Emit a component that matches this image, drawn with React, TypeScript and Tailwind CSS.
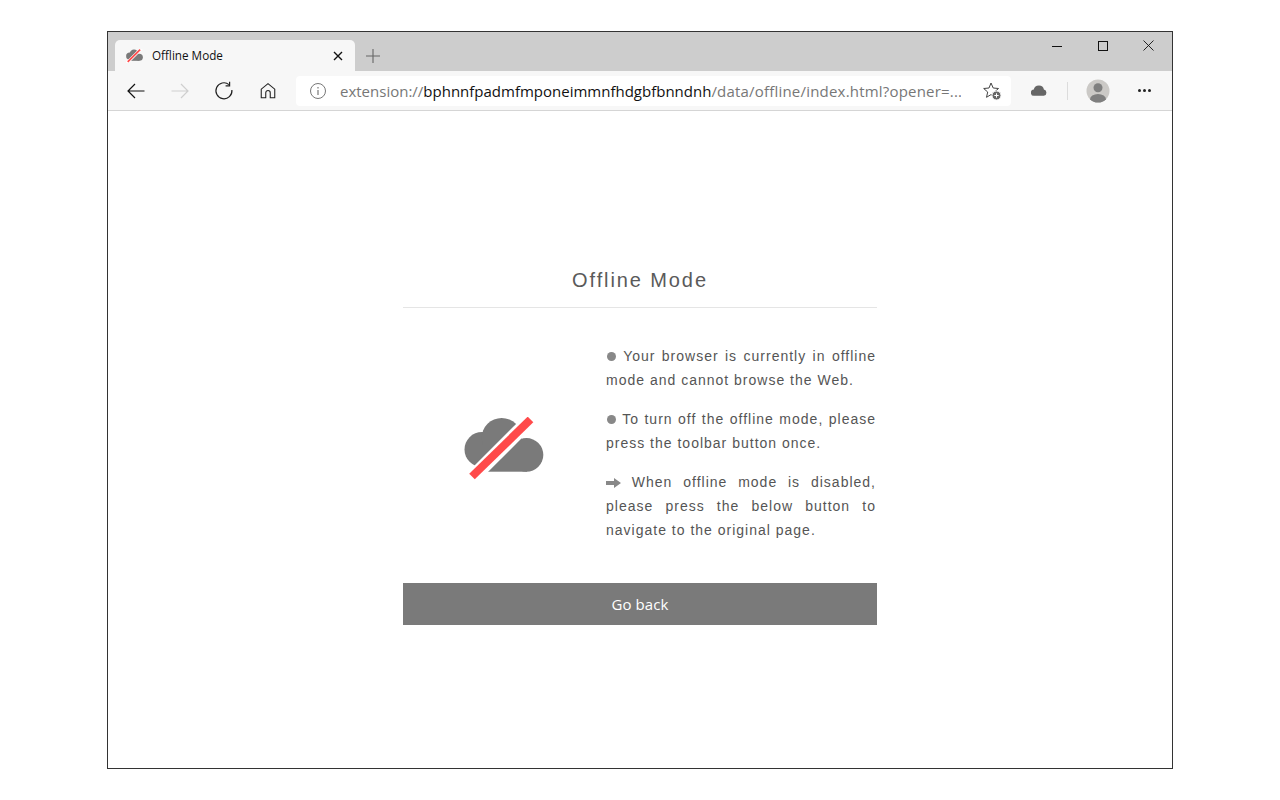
import React from "react";

// Cloud with a red slash, used large on the page and small on the tab
function OfflineCloud({ className }: { className: string }) {
  return (
    <svg viewBox="0 0 80 64" className={className}>
      <g fill="#7a7a7a">
        <circle cx="18" cy="32.500" r="17.500" />
        <circle cx="37.700" cy="21" r="20" />
        <circle cx="62.500" cy="37.900" r="16.800" />
        <rect x="18" y="28" width="45" height="26.700" />
      </g>
      <line x1="3" y1="66" x2="74" y2="-5" stroke="#ffffff" strokeWidth="14" />
      <line x1="8" y1="59.500" x2="66.500" y2="2.500" stroke="#ff4a4a" strokeWidth="8" />
    </svg>
  );
}

function NavIcon({ children, className }: { children: React.ReactNode; className?: string }) {
  return (
    <svg
      viewBox="0 0 20 20"
      fill="none"
      stroke="currentColor"
      strokeWidth="1.2"
      className={className ?? "w-5 h-5"}
    >
      {children}
    </svg>
  );
}

function Dot() {
  return <span className="inline-block w-[9px] h-[9px] rounded-full bg-[#888888] ml-px mr-px" />;
}

export default function App() {
  return (
    <div className="w-[1280px] h-[800px] bg-white pt-[31px] pl-[107px] overflow-hidden">
      <div className="w-[1066px] h-[738px] border border-[#333333] flex flex-col bg-white">
        {/* Tab strip */}
        <div className="h-[39px] bg-[#cdcdcd] flex items-end pl-[7px] relative">
          <div className="w-[240px] h-[31px] bg-[#f7f7f7] rounded-t-[5px] flex items-center pl-[11px] pr-[12px]">
            <OfflineCloud className="w-[17px] h-[14px]" />
            <span className="ml-[9px] text-[11.7px] text-[#111111] font-['Open_Sans',sans-serif] flex-1">
              Offline Mode
            </span>
            <svg viewBox="0 0 10 10" className="w-[10px] h-[10px]" stroke="#111111" strokeWidth="1.4">
              <path d="M1 1l8 8M9 1l-8 8" />
            </svg>
          </div>
          <svg viewBox="0 0 14 14" className="w-[14px] h-[14px] ml-[11px] mb-[8px]" stroke="#666666" strokeWidth="1.1">
            <path d="M7 0v14M0 7h14" />
          </svg>
          {/* Window controls */}
          <div className="absolute right-[18px] top-[8px] flex items-center">
            <svg viewBox="0 0 10 10" className="w-[10px] h-[10px]" stroke="#111111" strokeWidth="1">
              <path d="M0 5.5h10" />
            </svg>
            <svg viewBox="0 0 10 10" className="w-[10px] h-[10px] ml-[36px]" stroke="#111111" strokeWidth="1" fill="none">
              <rect x="0.5" y="0.5" width="9" height="9" />
            </svg>
            <svg viewBox="0 0 11 11" className="w-[11px] h-[11px] ml-[35px]" stroke="#111111" strokeWidth="0.9">
              <path d="M0.5 0.5l10 10M10.5 0.5l-10 10" />
            </svg>
          </div>
        </div>

        {/* Toolbar */}
        <div className="h-[40px] bg-[#f7f7f7] border-b border-[#d5d5d5] flex items-center pl-[18px]">
          <NavIcon className="w-5 h-5 text-[#111111]">
            <path d="M18.5 10H2M9 3l-7 7 7 7" />
          </NavIcon>
          <NavIcon className="w-5 h-5 text-[#cfcfcf] ml-[24px]">
            <path d="M1.5 10H18M11 3l7 7-7 7" />
          </NavIcon>
          <NavIcon className="w-5 h-5 text-[#222222] ml-[24px]">
            <path d="M15 3.6A8 8 0 1 0 17.9 9" />
            <path d="M15.6 0.8v4h-4" />
          </NavIcon>
          <NavIcon className="w-[18px] h-[18px] text-[#222222] ml-[25px]">
            <path d="M2.5 17.5V8L10 1.8 17.5 8v9.5h-5v-5.5a2.5 2.5 0 0 0-5 0v5.5z" />
          </NavIcon>
          <div className="ml-[19px] w-[715px] h-[30px] bg-white rounded-[4px] flex items-center pl-[14px] font-['Open_Sans',sans-serif] text-[15px] whitespace-nowrap overflow-hidden">
            <svg viewBox="0 0 16 16" className="w-4 h-4 shrink-0" fill="none" stroke="#777777" strokeWidth="1">
              <circle cx="8" cy="8" r="7.5" />
              <path d="M8 7v5M8 4v1.5" strokeWidth="1.2" />
            </svg>
            <span className="ml-[14px] w-[621px] pt-px overflow-hidden text-[#777777]">
              extension://<span className="text-[#111111]">bphnnfpadmfmponeimmnfhdgbfbnndnh</span>
              <span className="tracking-[0.2px]">/data/offline/index.html?opener=...</span>
            </span>
            <svg viewBox="0 0 20 20" className="w-5 h-5 ml-[21px] shrink-0" fill="none" stroke="#444444" strokeWidth="1">
              <path d="M9 2l2.2 5 5.3.5-4 3.5 1 5.300L9 13.600 4.500 16.300l1.200-5.300-4-3.500 5.300-.5z" />
              <circle cx="14.500" cy="14.500" r="4.500" fill="#666666" stroke="#f7f7f7" />
              <path d="M14.500 12.300v4.400M12.300 14.500h4.400" stroke="#ffffff" />
            </svg>
          </div>
          <svg viewBox="0 0 16 11" className="w-4 h-[11px] ml-[20px]" fill="#666666">
            <path d="M3.200 10.800a3.100 3.100 0 0 1-.4-6.200A5.200 5.200 0 0 1 8 .5a5 5 0 0 1 4.900 4.100 3.150 3.150 0 0 1-.1 6.200z" />
          </svg>
          <div className="w-px h-[18px] bg-[#dcdcdc] ml-[20px]" />
          <svg viewBox="0 0 24 24" className="w-6 h-6 ml-[18px]">
            <defs>
              <clipPath id="avatar">
                <circle cx="12" cy="12" r="11.500" />
              </clipPath>
            </defs>
            <circle cx="12" cy="12" r="11.500" fill="#cbc9c6" />
            <g clipPath="url(#avatar)" fill="#7f7f7f">
              <circle cx="12" cy="8.800" r="4.500" />
              <ellipse cx="12" cy="20.500" rx="8" ry="5.500" />
            </g>
          </svg>
          <div className="flex gap-[2.500px] ml-[28px]">
            <span className="w-[2.500px] h-[2.500px] rounded-full bg-[#222222]" />
            <span className="w-[2.500px] h-[2.500px] rounded-full bg-[#222222]" />
            <span className="w-[2.500px] h-[2.500px] rounded-full bg-[#222222]" />
          </div>
        </div>

        {/* Page content */}
        <div className="flex-1 flex flex-col items-center pt-[156px] font-['Liberation_Sans',sans-serif]">
          <div className="w-[474px] flex flex-col">
            <h1 className="text-[20px] leading-[26px] tracking-[1.9px] text-[#5a5a5a] text-center pb-[14px] border-b border-[#e5e5e5]">
              Offline Mode
            </h1>
            <div className="flex mt-[36px]">
              <div className="w-[203px] flex items-center justify-center pt-[11px] pr-[2px]">
                <OfflineCloud className="w-[80px] h-[64px]" />
              </div>
              <div className="w-[270px] text-[14px] leading-[24px] tracking-[1px] text-[#555555] text-justify flex flex-col gap-[15px]">
                <p>
                  <Dot /> Your browser is currently in offline mode and cannot browse the Web.
                </p>
                <p>
                  <Dot /> To turn off the offline mode, please press the toolbar button once.
                </p>
                <p>
                  <svg viewBox="0 0 15 10" className="inline-block w-[15px] h-[10px]" fill="#888888">
                    <path d="M0 3h8V0l7 5-7 5V7H0z" />
                  </svg>{" "}
                  When offline mode is disabled, please press the below button to navigate to the original page.
                </p>
              </div>
            </div>
            <button
              type="button"
              className="mt-[41px] h-[42px] bg-[#7a7a7a] text-white text-[15px] tracking-[0.1px] font-['Open_Sans',sans-serif]"
            >
              Go back
            </button>
          </div>
        </div>
      </div>
    </div>
  );
}
